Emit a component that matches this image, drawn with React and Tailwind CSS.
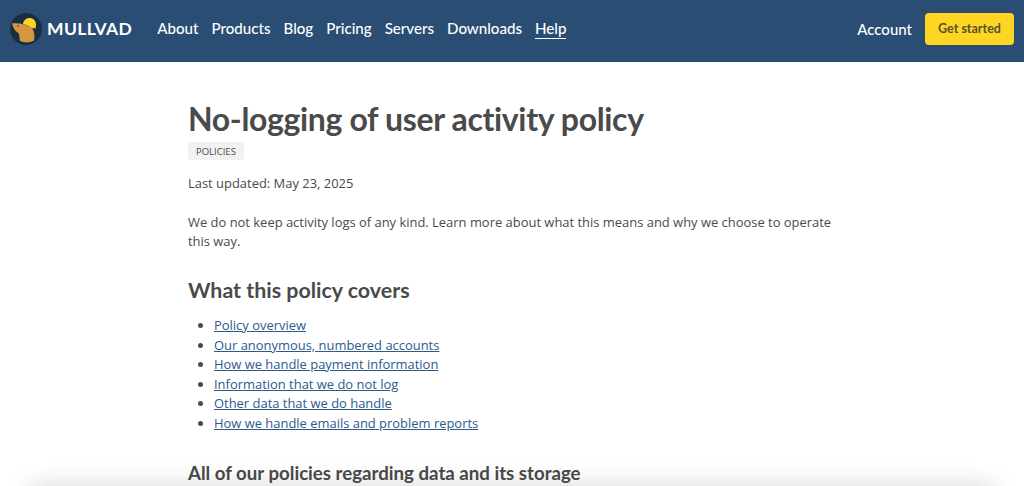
const NAV = ["About", "Products", "Blog", "Pricing", "Servers", "Downloads", "Help"];
const LINKS = [
  "Policy overview",
  "Our anonymous, numbered accounts",
  "How we handle payment information",
  "Information that we do not log",
  "Other data that we do handle",
  "How we handle emails and problem reports",
];

const Logo = () => (
  <svg width="32" height="32" viewBox="0 0 32 32">
    <circle cx="16" cy="16" r="16" fill="#192e45" />
    <path d="M2 10.500c4-.5 8 0 12 1l8 3c1.500 3 2.500 6 2.500 9l-.5 4c-4 2.500-10 2.500-14 .5-.5-3-.5-6-1.500-8-2-1-3.500-2.500-4.500-4.500-.8-1.800-1.500-3.500-2-5z" fill="#d4973f" />
    <path d="M13 11c.5-3.500 3-6 6.500-6 3.500 0 6.500 2.500 6.500 6.500l-.5 4-3-.5c-3-1.500-6-3-9.500-4z" fill="#ffd524" />
    <circle cx="8" cy="13" r="0.8" fill="#192e45" />
  </svg>
);

export default function App() {
  return (
    <div className="relative h-[486px] overflow-hidden bg-white font-['Open_Sans',sans-serif] text-[#4a4a4a]">
      <header className="flex h-[62px] items-center border-b border-[#24466b] bg-[#294d73] pb-[3px] pl-[10px] pr-[10px] font-['Lato',sans-serif]">
        <Logo />
        <span className="ml-[5px] text-[17.5px] font-bold tracking-[0.35px] text-white">MULLVAD</span>
        <nav className="ml-[25px] flex gap-[13px]">
          {NAV.map((n) => (
            <a key={n} className={n === "Help" ? "border-b border-white text-[15.1px] font-medium leading-[19px] text-white" : "text-[15.1px] font-medium leading-[19px] text-white"}>
              {n}
            </a>
          ))}
        </nav>
        <a className="ml-auto text-[15px] font-medium text-white">Account</a>
        <button className="ml-[13px] h-[32px] w-[89px] rounded-[4px] bg-[#ffd524] pt-[1px] text-[12.5px] font-bold text-[#54512c]">
          Get started
        </button>
      </header>
      <main className="pl-[188px] pr-[188px]">
        <h1 className="mt-[38px] font-['Lato',sans-serif] text-[32px] font-bold leading-[38px] tracking-[-0.35px]">No-logging of user activity policy</h1>
        <span className="mt-[4px] block w-fit rounded-[2px] bg-[#f1f1f1] px-[8px] pt-[1px] text-[9.5px] leading-[17px]">POLICIES</span>
        <p className="mt-[13px] text-[12.95px] leading-[20px]">Last updated: May 23, 2025</p>
        <p className="mt-[20px] text-[12.95px] leading-[19px]">
          We do not keep activity logs of any kind. Learn more about what this means and why we choose to operate this way.
        </p>
        <h2 className="mt-[25px] font-['Lato',sans-serif] text-[21.4px] font-bold leading-[28px]">What this policy covers</h2>
        <ul className="mt-[12px] list-disc pl-[26px] text-[12.95px] leading-[19.5px]">
          {LINKS.map((l) => (
            <li key={l}>
              <a className="text-[#2d5a8c] underline">{l}</a>
            </li>
          ))}
        </ul>
        <h3 className="mt-[28px] font-['Lato',sans-serif] text-[18.66px] font-bold leading-[24px]">All of our policies regarding data and its storage</h3>
      </main>
      <div className="absolute bottom-[-20px] left-[30px] right-[30px] h-[20px] shadow-[0_0_24px_rgba(0,0,0,0.18)]" />
    </div>
  );
}
